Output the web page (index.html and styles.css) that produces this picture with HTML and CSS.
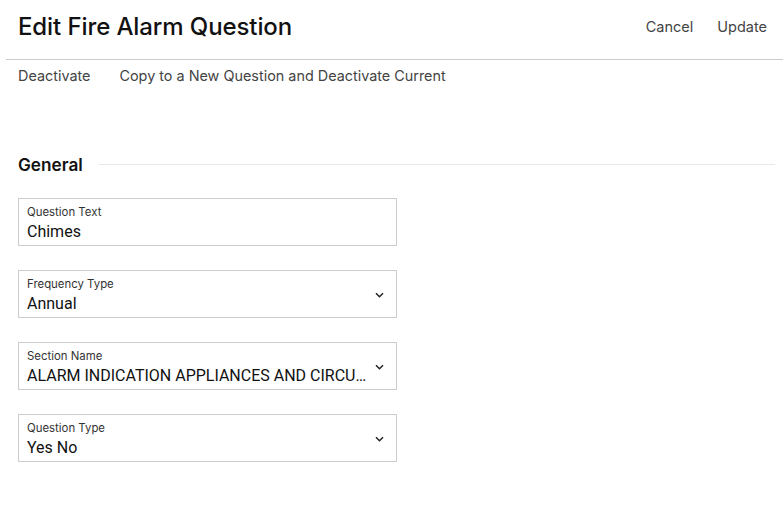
FILE: index.html
```html
<!DOCTYPE html>
<html lang="en">
<head>
  <meta charset="UTF-8">
  <meta name="viewport" content="width=device-width, initial-scale=1.0">
  <title>Edit Fire Alarm Question</title>
  <link rel="stylesheet" href="styles.css">
</head>
<body>
  <div class="header">
    <h1>Edit Fire Alarm Question</h1>
    <div class="actions">
      <button>Cancel</button>
      <button>Update</button>
    </div>
  </div>
  <div class="toolbar">
    <button>Deactivate</button>
    <button>Copy to a New Question and Deactivate Current</button>
  </div>
  <div class="section">
    <h2>General</h2>
    <span class="rule"></span>
  </div>
  <form class="fields">
    <div class="field">
      <label>Question Text</label>
      <div class="value">Chimes</div>
    </div>
    <div class="field select">
      <label>Frequency Type</label>
      <div class="value">Annual</div>
      <svg class="chevron" width="9" height="6" viewBox="0 0 9 6"><path d="M1 1.2l3.5 3.5 3.5-3.5" fill="none" stroke="#222" stroke-width="1.5"/></svg>
    </div>
    <div class="field select">
      <label>Section Name</label>
      <div class="value">ALARM INDICATION APPLIANCES AND CIRCUITS</div>
      <svg class="chevron" width="9" height="6" viewBox="0 0 9 6"><path d="M1 1.2l3.5 3.5 3.5-3.5" fill="none" stroke="#222" stroke-width="1.5"/></svg>
    </div>
    <div class="field select">
      <label>Question Type</label>
      <div class="value">Yes No</div>
      <svg class="chevron" width="9" height="6" viewBox="0 0 9 6"><path d="M1 1.2l3.5 3.5 3.5-3.5" fill="none" stroke="#222" stroke-width="1.5"/></svg>
    </div>
  </form>
</body>
</html>
```

FILE: styles.css
```css
* {
  padding: 0;
  margin: 0;
  box-sizing: border-box;
}
body {
  font-family: Inter, "Liberation Sans", sans-serif;
  color: #111;
  background: #fff;
}
button {
  border: none;
  background: none;
  font-family: Inter, "Liberation Sans", sans-serif;
  color: #444;
  cursor: pointer;
}
.header {
  display: flex;
  align-items: center;
  justify-content: space-between;
  height: 60px;
  margin-left: 6px;
  padding: 0 16px 6px 12px;
  border-bottom: 1px solid #ccc;
}
.header h1 {
  font-size: 24px;
  font-weight: 500;
  letter-spacing: -0.1px;
}
.actions {
  display: flex;
  gap: 24px;
}
.actions button {
  font-size: 14.5px;
}
.toolbar {
  display: flex;
  gap: 29px;
  padding: 7px 18px;
}
.toolbar button {
  font-size: 14.4px;
}
.section {
  display: flex;
  align-items: center;
  gap: 16px;
  margin: 63px 8px 23px 18px;
}
.section h2 {
  font-size: 17.2px;
  font-weight: 600;
}
.rule {
  flex: 1;
  border-top: 1px solid #e8e8e8;
}
.fields {
  display: flex;
  flex-direction: column;
  gap: 24px;
  width: 379px;
  margin-left: 18px;
}
.field {
  position: relative;
  height: 48px;
  border: 1px solid #ccc;
  padding: 7px 28px 0 8px;
}
.field label {
  display: block;
  font-size: 11.4px;
  color: #333;
  line-height: 13px;
}
.field .value {
  font-family: Roboto, "Liberation Sans", sans-serif;
  font-size: 16px;
  line-height: 20px;
  margin-top: 3px;
  white-space: nowrap;
  overflow: hidden;
  text-overflow: ellipsis;
}
.chevron {
  position: absolute;
  right: 12px;
  top: 21px;
}
```
